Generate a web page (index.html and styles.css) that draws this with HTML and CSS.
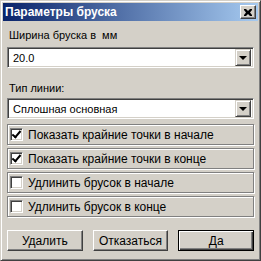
FILE: index.html
```html
<!DOCTYPE html>
<html lang="ru">
<head>
    <meta charset="UTF-8">
    <title>Параметры бруска</title>
    <link rel="stylesheet" href="styles.css">
</head>
<body>
    <div class="window">
        <div class="titlebar">
            <span class="title">Параметры бруска</span>
            <span class="close-btn">
                <svg width="8" height="7" viewBox="0 0 8 7">
                    <path d="M0 0h2l2 2 2-2h2v1l-2 2.5 2 2.5v1h-2l-2-2-2 2h-2v-1l2-2.5-2-2.5z" fill="#000"/>
                </svg>
            </span>
        </div>

        <div class="content">
            <div class="label first">Ширина бруска в &nbsp;мм</div>
            <div class="combo">
                <span class="combo-text">20.0</span>
                <span class="combo-btn"><span class="arrow"></span></span>
            </div>

            <div class="label second">Тип линии:</div>
            <div class="combo">
                <span class="combo-text">Сплошная основная</span>
                <span class="combo-btn"><span class="arrow"></span></span>
            </div>

            <div class="options">
                <div class="option">
                    <span class="checkbox checked"></span>
                    <span>Показать крайние точки в начале</span>
                </div>
                <div class="option">
                    <span class="checkbox checked"></span>
                    <span>Показать крайние точки в конце</span>
                </div>
                <div class="option">
                    <span class="checkbox"></span>
                    <span>Удлинить брусок в начале</span>
                </div>
                <div class="option">
                    <span class="checkbox"></span>
                    <span>Удлинить брусок в конце</span>
                </div>
            </div>

            <div class="buttons">
                <button class="btn">Удалить</button>
                <button class="btn">Отказаться</button>
                <button class="btn btn-default">Да</button>
            </div>
        </div>
    </div>
</body>
</html>
```

FILE: styles.css
```css
body {
    margin: 0;
    padding: 0;
    background: #d4d0c8;
    font-family: "Liberation Sans", Arial, sans-serif;
    font-size: 11px;
    color: #000;
}

.window {
    width: 261px;
    height: 261px;
    box-sizing: border-box;
    background: #d4d0c8;
    border: 1px solid;
    border-color: #d4d0c8 #404040 #404040 #d4d0c8;
    box-shadow: inset 1px 1px #fff, inset -1px -1px #808080;
    padding: 2px;
}

.titlebar {
    height: 18px;
    display: flex;
    align-items: center;
    justify-content: space-between;
    padding: 0 2px 0 2px;
    background: linear-gradient(to right, #0a246a, #a6caf0);
}

.title {
    color: #fff;
    font-weight: bold;
    font-size: 12px;
    line-height: 18px;
}

.close-btn {
    width: 16px;
    height: 14px;
    box-sizing: border-box;
    display: flex;
    align-items: center;
    justify-content: center;
    background: #d4d0c8;
    border: 1px solid;
    border-color: #fff #404040 #404040 #fff;
    box-shadow: inset -1px -1px #808080;
}

.content {
    padding: 0 4px;
}

.label {
    line-height: 13px;
    padding-left: 2px;
}

.label.first {
    margin-top: 8px;
    margin-bottom: 5px;
}

.label.second {
    margin-top: 14px;
    margin-bottom: 3px;
}

.combo {
    height: 21px;
    box-sizing: border-box;
    display: flex;
    align-items: center;
    justify-content: space-between;
    background: #fff;
    border: 1px solid;
    border-color: #808080 #fff #fff #808080;
    box-shadow: inset 1px 1px #404040, inset -1px -1px #d4d0c8;
    padding: 2px;
}

.combo-text {
    padding-left: 3px;
    font-size: 11px;
}

.combo-btn {
    width: 16px;
    height: 17px;
    box-sizing: border-box;
    display: flex;
    align-items: center;
    justify-content: center;
    background: #d4d0c8;
    border: 1px solid;
    border-color: #d4d0c8 #404040 #404040 #d4d0c8;
    box-shadow: inset 1px 1px #fff, inset -1px -1px #808080;
}

.arrow {
    width: 0;
    height: 0;
    border-left: 4px solid transparent;
    border-right: 4px solid transparent;
    border-top: 4px solid #000;
    margin-top: 1px;
}

.options {
    margin-top: 5px;
    display: flex;
    flex-direction: column;
    gap: 3px;
}

.option {
    height: 21px;
    box-sizing: border-box;
    display: flex;
    align-items: center;
    gap: 5px;
    padding-left: 2px;
    font-size: 12px;
    border: 1px solid #808080;
    box-shadow: inset 1px 1px #fff, 1px 1px #fff;
}

.checkbox {
    width: 13px;
    height: 13px;
    box-sizing: border-box;
    position: relative;
    background: #fff;
    border: 1px solid;
    border-color: #808080 #fff #fff #808080;
    box-shadow: inset 1px 1px #404040, inset -1px -1px #d4d0c8;
}

.checkbox.checked::after {
    content: "";
    position: absolute;
    left: 3px;
    top: 0;
    width: 3px;
    height: 7px;
    border: solid #000;
    border-width: 0 2px 2px 0;
    transform: rotate(40deg);
}

.buttons {
    margin-top: 13px;
    display: grid;
    grid-template-columns: 1fr 1fr 1fr;
    gap: 10px;
}

.btn {
    height: 21px;
    box-sizing: border-box;
    font-family: "Liberation Sans", Arial, sans-serif;
    font-size: 12px;
    color: #000;
    background: #d4d0c8;
    border: 1px solid;
    border-color: #fff #404040 #404040 #fff;
    box-shadow: inset -1px -1px #808080;
    padding: 0;
}

.btn-default {
    border: 1px solid #000;
    box-shadow: inset 1px 1px #fff, inset -1px -1px #404040, inset -2px -2px #808080;
}
```
